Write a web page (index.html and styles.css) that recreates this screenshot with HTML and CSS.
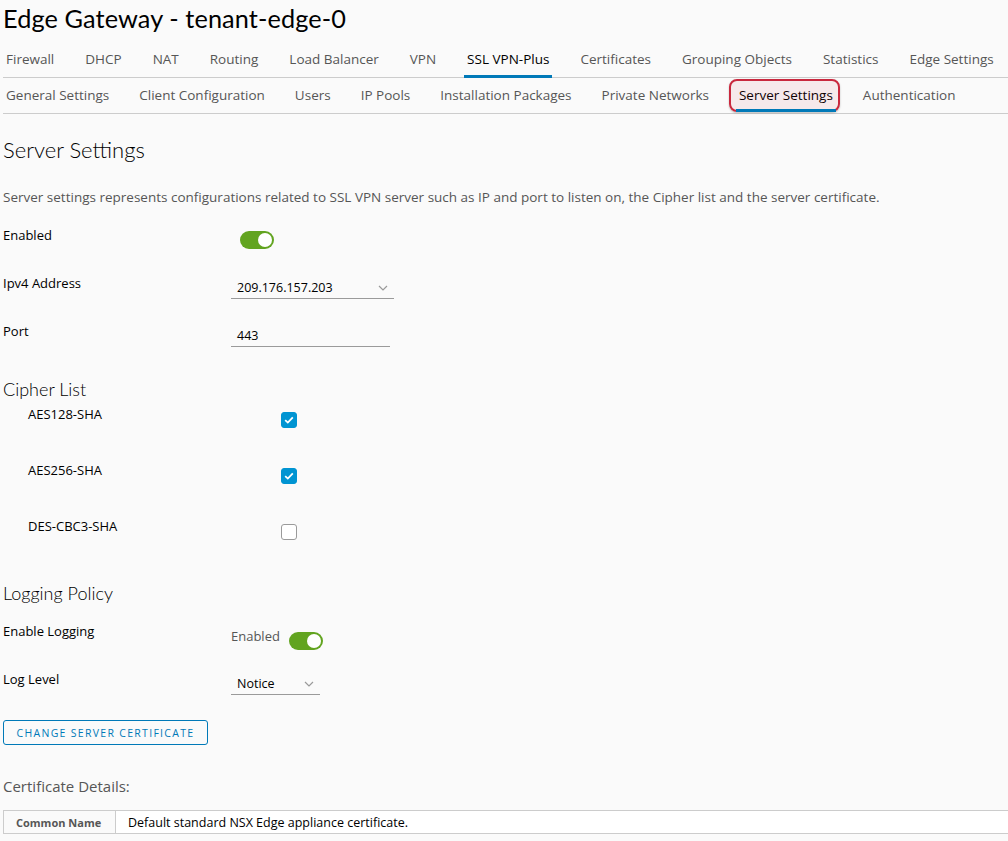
FILE: index.html
```html
<!DOCTYPE html>
<html>
<head>
<meta charset="utf-8">
<link rel="stylesheet" href="styles.css">
</head>
<body>
<div class="page">
  <h1 class="title">Edge Gateway - tenant-edge-0</h1>
  <nav class="tabs main-tabs">
    <span class="tab">Firewall</span>
    <span class="tab">DHCP</span>
    <span class="tab">NAT</span>
    <span class="tab">Routing</span>
    <span class="tab">Load Balancer</span>
    <span class="tab">VPN</span>
    <span class="tab active">SSL VPN-Plus</span>
    <span class="tab">Certificates</span>
    <span class="tab">Grouping Objects</span>
    <span class="tab">Statistics</span>
    <span class="tab">Edge Settings</span>
  </nav>
  <nav class="tabs sub-tabs">
    <span class="tab">General Settings</span>
    <span class="tab">Client Configuration</span>
    <span class="tab">Users</span>
    <span class="tab">IP Pools</span>
    <span class="tab">Installation Packages</span>
    <span class="tab">Private Networks</span>
    <span class="tab active highlighted">Server Settings</span>
    <span class="tab">Authentication</span>
  </nav>

  <h2 class="section-title">Server Settings</h2>
  <p class="desc">Server settings represents configurations related to SSL VPN server such as IP and port to listen on, the Cipher list and the server certificate.</p>

  <div class="form-row first-row">
    <label class="lbl">Enabled</label>
    <div class="ctrl"><span class="toggle"><span class="knob"></span></span></div>
  </div>
  <div class="form-row">
    <label class="lbl">Ipv4 Address</label>
    <div class="ctrl ctrl-field"><div class="select ip-select"><span>209.176.157.203</span><svg class="chev" width="10" height="6" viewBox="0 0 10 6"><path d="M1 1 L5 5 L9 1" fill="none" stroke="#9a9a9a" stroke-width="1.2"/></svg></div></div>
  </div>
  <div class="form-row">
    <label class="lbl">Port</label>
    <div class="ctrl ctrl-field"><div class="input port-input">443</div></div>
  </div>

  <h3 class="sub-title cipher-title">Cipher List</h3>
  <div class="cipher-list">
    <div class="cipher-row">
      <span class="cipher-name">AES128-SHA</span>
      <span class="cb checked"><svg width="10" height="8" viewBox="0 0 10 8"><path d="M1.2 4.2 L3.8 6.6 L8.8 1.4" fill="none" stroke="#fff" stroke-width="1.8"/></svg></span>
    </div>
    <div class="cipher-row">
      <span class="cipher-name">AES256-SHA</span>
      <span class="cb checked"><svg width="10" height="8" viewBox="0 0 10 8"><path d="M1.2 4.2 L3.8 6.6 L8.8 1.4" fill="none" stroke="#fff" stroke-width="1.8"/></svg></span>
    </div>
    <div class="cipher-row">
      <span class="cipher-name">DES-CBC3-SHA</span>
      <span class="cb"></span>
    </div>
  </div>

  <h3 class="sub-title logging-title">Logging Policy</h3>
  <div class="form-row first-row-log">
    <label class="lbl">Enable Logging</label>
    <div class="ctrl log-ctrl"><span class="toggle-label">Enabled</span><span class="toggle"><span class="knob"></span></span></div>
  </div>
  <div class="form-row">
    <label class="lbl">Log Level</label>
    <div class="ctrl ctrl-field"><div class="select level-select"><span>Notice</span><svg class="chev" width="10" height="6" viewBox="0 0 10 6"><path d="M1 1 L5 5 L9 1" fill="none" stroke="#9a9a9a" stroke-width="1.2"/></svg></div></div>
  </div>

  <button class="btn">CHANGE SERVER CERTIFICATE</button>

  <h4 class="cert-title">Certificate Details:</h4>
  <table class="cert-table">
    <tr><th>Common Name</th><td>Default standard NSX Edge appliance certificate.</td></tr>
  </table>
</div>
</body>
</html>
```
FILE: styles.css
```css
* { box-sizing: border-box; }
html, body { margin: 0; padding: 0; background: #fafafa; }
body {
  font-family: "Open Sans", Lato, "Liberation Sans", sans-serif;
  color: #000;
  overflow: hidden;
}
.page { padding: 0 0 0 3px; width: 1008px; }
.title {
  margin: 0;
  padding-top: 3px;
  font-family: Lato, "Open Sans", sans-serif;
  font-size: 25.3px;
  font-weight: 400;
  line-height: 30px;
  color: #000;
  letter-spacing: 0.1px;
}
.tabs {
  display: flex;
  border-bottom: 1px solid #ccc;
  white-space: nowrap;
}
.main-tabs { margin-top: 9px; height: 36px; }
.sub-tabs { height: 36px; }
.tab {
  position: relative;
  font-size: 13.5px;
  color: #565656;
  padding: 0 3px;
  line-height: 34px;
  margin-right: 24px;
}
.main-tabs .tab { margin-right: 25px; }
.tab.active { color: #000; }
.tab.active::after {
  content: "";
  position: absolute;
  left: 0; right: 0; bottom: -1px;
  height: 3px;
  background: #0079b8;
}
.sub-tabs .tab.active::after { bottom: 1px; }
.highlighted::before {
  content: "";
  position: absolute;
  left: -7px; right: -4px; top: 1px; bottom: 1px;
  border: 2px solid #c9283e;
  border-radius: 8px;
  background: rgba(201, 40, 62, 0.08);
  box-shadow: 0 1px 2px rgba(0,0,0,0.25);
}

.section-title {
  margin: 23px 0 0 0;
  font-family: Lato, "Open Sans", sans-serif;
  font-size: 22px;
  font-weight: 300;
  line-height: 26px;
}
.desc {
  margin: 26px 0 0 0;
  font-size: 13.5px;
  line-height: 16px;
  color: #565656;
}
.form-row {
  display: flex;
  align-items: flex-start;
  height: 48px;
}
.first-row { margin-top: 22px; }
.lbl {
  width: 228px;
  font-size: 13px;
  line-height: 16px;
}
.ctrl { padding-top: 4px; }
.ctrl-field { padding-top: 2px; }
.toggle {
  display: inline-block;
  position: relative;
  width: 34px;
  height: 18px;
  border-radius: 9px;
  background: #62a420;
  margin-left: 9px;
}
.knob {
  position: absolute;
  right: 2px; top: 2px;
  width: 14px; height: 14px;
  border-radius: 50%;
  background: #fff;
}
.select, .input {
  display: flex;
  align-items: center;
  height: 22px;
  border-bottom: 1px solid #9a9a9a;
  font-size: 12.5px;
  padding: 0 6px;
}
.ip-select { width: 163px; justify-content: space-between; }
.port-input { width: 159px; }
.level-select { width: 89px; justify-content: space-between; }

.sub-title {
  margin: 0;
  font-family: Lato, "Open Sans", sans-serif;
  font-size: 18px;
  font-weight: 300;
  line-height: 22px;
}
.cipher-title { margin-top: 7px; }
.cipher-list { margin-top: 6px; }
.cipher-row {
  display: flex;
  align-items: flex-start;
  height: 56px;
  padding-left: 25px;
}
.cipher-name {
  width: 253px;
  font-size: 13px;
  line-height: 16px;
}
.cb {
  display: inline-flex;
  align-items: center;
  justify-content: center;
  width: 16px; height: 16px;
  border-radius: 3px;
  border: 1px solid #9a9a9a;
  background: #fff;
  margin-top: 6px;
}
.cb.checked { background: #0094d2; border-color: #0094d2; }

.logging-title { margin-top: 8px; }
.first-row-log { margin-top: 19px; }
.log-ctrl { display: flex; align-items: flex-start; padding-top: 0; }
.toggle-label { font-size: 13px; line-height: 16px; color: #565656; margin-top: 5px; }
.log-ctrl .toggle { margin-left: 9px; margin-top: 9px; }

.btn {
  display: block;
  margin-top: 1px;
  height: 25px;
  width: 205px;
  padding: 0;
  border: 1px solid #0079b8;
  border-radius: 3px;
  background: transparent;
  color: #0079b8;
  font-family: "Open Sans", Lato, sans-serif;
  font-size: 10.5px;
  letter-spacing: 1.3px;
}
.cert-title {
  margin: 32px 0 0 0;
  font-size: 15px;
  font-weight: 400;
  line-height: 18px;
  color: #565656;
}
.cert-table {
  margin-top: 15px;
  border-collapse: collapse;
  width: 1010px;
  font-size: 12.5px;
}
.cert-table th, .cert-table td {
  border: 1px solid #ccc;
  height: 23px;
  padding: 0 12px;
  text-align: left;
}
.cert-table th {
  width: 112px;
  background: #fafafa;
  color: #565656;
  font-weight: 700;
  font-size: 11px;
}
.cert-table td { background: #fff; color: #000; }
```
